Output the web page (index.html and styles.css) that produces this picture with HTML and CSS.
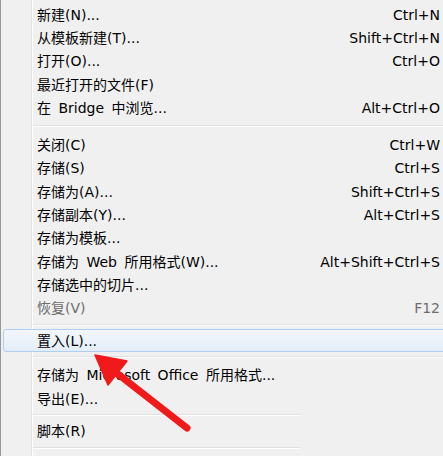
FILE: index.html
```html
<!DOCTYPE html>
<html lang="zh-CN">
<head>
<meta charset="utf-8">
<title>文件菜单</title>
<link rel="stylesheet" href="styles.css">
</head>
<body>
<div class="menu">
  <ul class="group">
    <li class="item"><span class="label">新建(N)...</span><span class="key">Ctrl+N</span></li>
    <li class="item"><span class="label">从模板新建(T)...</span><span class="key">Shift+Ctrl+N</span></li>
    <li class="item"><span class="label">打开(O)...</span><span class="key">Ctrl+O</span></li>
    <li class="item"><span class="label">最近打开的文件(F)</span></li>
    <li class="item"><span class="label">在 Bridge 中浏览...</span><span class="key">Alt+Ctrl+O</span></li>
  </ul>
  <div class="sep sep-wide"></div>
  <ul class="group">
    <li class="item"><span class="label">关闭(C)</span><span class="key">Ctrl+W</span></li>
    <li class="item"><span class="label">存储(S)</span><span class="key">Ctrl+S</span></li>
    <li class="item"><span class="label">存储为(A)...</span><span class="key">Shift+Ctrl+S</span></li>
    <li class="item"><span class="label">存储副本(Y)...</span><span class="key">Alt+Ctrl+S</span></li>
    <li class="item"><span class="label">存储为模板...</span></li>
    <li class="item"><span class="label">存储为 Web 所用格式(W)...</span><span class="key">Alt+Shift+Ctrl+S</span></li>
    <li class="item"><span class="label">存储选中的切片...</span></li>
    <li class="item disabled"><span class="label">恢复(V)</span><span class="key">F12</span></li>
  </ul>
  <div class="sep sep-tight"></div>
  <ul class="group">
    <li class="item hover"><span class="label">置入(L)...</span></li>
  </ul>
  <div class="sep sep-mid"></div>
  <ul class="group">
    <li class="item"><span class="label">存储为 Microsoft Office 所用格式...</span></li>
    <li class="item"><span class="label">导出(E)...</span></li>
  </ul>
  <div class="sep sep-tight short"></div>
  <ul class="group">
    <li class="item"><span class="label">脚本(R)</span></li>
  </ul>
  <div class="sep sep-tight short"></div>

  <svg class="arrow" width="443" height="456" viewBox="0 0 443 456" aria-hidden="true">
    <line x1="114" y1="371" x2="187" y2="428" stroke="#f01a1a" stroke-width="7" stroke-linecap="round"/>
    <polygon points="95,355 108,385 127,361" fill="#f01a1a" stroke="#f01a1a" stroke-width="1.5" stroke-linejoin="round"/>
  </svg>
</div>
</body>
</html>
```

FILE: styles.css
```css
html, body {
  margin: 0;
  padding: 0;
  background: #f0f0f0;
  overflow: hidden;
}

.menu {
  position: relative;
  width: 452px;
  height: 470px;
  box-sizing: border-box;
  padding-top: 3px;
  border-left: 1px solid #979797;
  background-color: #f0f0f0;
  background-image: linear-gradient(to right,
    transparent 30px, #e2e3e3 30px, #e2e3e3 31px,
    #ffffff 31px, #ffffff 32px, transparent 32px);
  font-family: "DejaVu Sans", "Noto Sans CJK SC", sans-serif;
  font-size: 14px;
  color: #000;
}

.group {
  list-style: none;
  margin: 0;
  padding: 0;
}

.item {
  display: flex;
  align-items: center;
  justify-content: space-between;
  height: 23.3px;
  box-sizing: border-box;
  padding-left: 36px;
  padding-right: 12px;
  white-space: nowrap;
  line-height: 1;
}

.label {
  word-spacing: 3px;
}

.item.disabled {
  color: #6d6d6d;
}

.item.hover {
  height: 23px;
  margin-left: 2px;
  padding-left: 33px;
  border: 1px solid #aecff3;
  border-radius: 3px;
  background: linear-gradient(to bottom, #f3f7fc, #e4edf8);
}

.sep {
  box-sizing: border-box;
  padding-left: 32px;
}

.sep::after {
  content: "";
  display: block;
  height: 0;
  border-top: 1px solid #e0e0e0;
  border-bottom: 1px solid #ffffff;
}

.sep-wide {
  height: 14px;
  padding-top: 6px;
}

.sep-tight {
  height: 9.4px;
  padding-top: 4px;
}

.sep-mid {
  height: 11.4px;
  padding-top: 4px;
}

.sep.short::after {
  width: 267px;
}

.arrow {
  position: absolute;
  left: -1px;
  top: 0;
  pointer-events: none;
}
```
